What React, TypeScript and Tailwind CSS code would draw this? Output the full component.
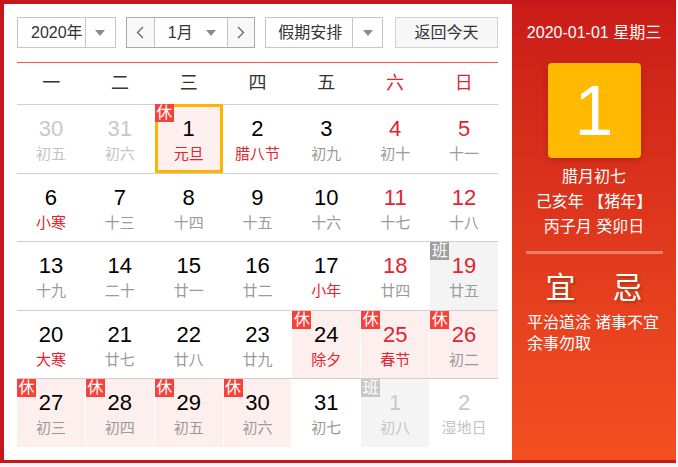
import React from "react";

type Day = {
  n: number;
  lunar: string;
  out?: boolean;
  red?: boolean;
  fest?: boolean;
  tag?: "休" | "班";
  selected?: boolean;
};

const rows: Day[][] = [
  [
    { n: 30, lunar: "初五", out: true },
    { n: 31, lunar: "初六", out: true },
    { n: 1, lunar: "元旦", fest: true, tag: "休", selected: true },
    { n: 2, lunar: "腊八节", fest: true },
    { n: 3, lunar: "初九" },
    { n: 4, lunar: "初十", red: true },
    { n: 5, lunar: "十一", red: true },
  ],
  [
    { n: 6, lunar: "小寒", fest: true },
    { n: 7, lunar: "十三" },
    { n: 8, lunar: "十四" },
    { n: 9, lunar: "十五" },
    { n: 10, lunar: "十六" },
    { n: 11, lunar: "十七", red: true },
    { n: 12, lunar: "十八", red: true },
  ],
  [
    { n: 13, lunar: "十九" },
    { n: 14, lunar: "二十" },
    { n: 15, lunar: "廿一" },
    { n: 16, lunar: "廿二" },
    { n: 17, lunar: "小年", fest: true },
    { n: 18, lunar: "廿四", red: true },
    { n: 19, lunar: "廿五", red: true, tag: "班" },
  ],
  [
    { n: 20, lunar: "大寒", fest: true },
    { n: 21, lunar: "廿七" },
    { n: 22, lunar: "廿八" },
    { n: 23, lunar: "廿九" },
    { n: 24, lunar: "除夕", fest: true, tag: "休" },
    { n: 25, lunar: "春节", fest: true, red: true, tag: "休" },
    { n: 26, lunar: "初二", red: true, tag: "休" },
  ],
  [
    { n: 27, lunar: "初三", tag: "休" },
    { n: 28, lunar: "初四", tag: "休" },
    { n: 29, lunar: "初五", tag: "休" },
    { n: 30, lunar: "初六", tag: "休" },
    { n: 31, lunar: "初七" },
    { n: 1, lunar: "初八", out: true, tag: "班" },
    { n: 2, lunar: "湿地日", out: true },
  ],
];

const weekdays = ["一", "二", "三", "四", "五", "六", "日"];

function Caret() {
  return (
    <svg width="10" height="6" viewBox="0 0 10 6">
      <path d="M0 0h10L5 6z" fill="#8c8c8c" />
    </svg>
  );
}

function Chevron({ dir }: { dir: "l" | "r" }) {
  return (
    <svg width="8" height="13" viewBox="0 0 8 13">
      <path
        d={dir === "l" ? "M7 1L1.5 6.5 7 12" : "M1 1l5.5 5.5L1 12"}
        fill="none"
        stroke="#666"
        strokeWidth="1.3"
      />
    </svg>
  );
}

function Cell({ d }: { d: Day }) {
  let bg = "";
  if (d.tag === "休") bg = "bg-[#fdefee]";
  if (d.tag === "班") bg = "bg-[#f4f4f4]";
  if (d.selected) bg = "bg-[#fdf0ef] border-[3px] border-[#ffb400] -mt-px";

  let numColor = "text-black";
  if (d.red) numColor = "text-[#e3232e]";
  if (d.out) numColor = "text-[#c8c8c8]";

  let lunarColor = "text-[#9a9a9a]";
  if (d.fest) lunarColor = "text-[#e3232e]";
  if (d.out) lunarColor = "text-[#c4c4c4]";

  const badgeBg = d.tag === "休" ? "bg-[#f8413a]" : d.out ? "bg-[#c8c8c8]" : "bg-[#9e9e9e]";

  return (
    <div className={`relative flex flex-col items-center ${bg} ${d.selected ? "pt-[9px]" : "pt-[11px]"}`}>
      {d.tag && (
        <span
          className={`absolute ${d.selected ? "-top-[3px] -left-[3px]" : "top-0 left-0"} w-[19px] h-[18px] ${badgeBg} text-white text-[16px] leading-[18px] text-center`}
        >
          {d.tag}
        </span>
      )}
      <span className={`text-[22px] leading-[26px] ${numColor}`}>{d.n}</span>
      <span className={`text-[15px] leading-[24px] ${lunarColor}`}>{d.lunar}</span>
    </div>
  );
}

export default function App() {
  return (
    <div
      className="w-[678px] h-[467px] bg-[#f4f4f4]"
      style={{ fontFamily: '"Liberation Sans", "Noto Sans CJK SC", sans-serif' }}
    >
      <div className="flex w-[676px] h-[463px] bg-[#c8171c] pl-[4px] pt-[4px] pb-[3px]">
        {/* left: calendar */}
        <div className="w-[508px] h-full bg-white pt-[13px] pl-[13px] pr-[14px]">
          <div className="flex h-[31px] text-[16px] text-[#333]">
            <div className="flex w-[99px] border border-[#c6c6c6] bg-white">
              <div className="flex-1 flex items-center pl-[13px]">2020年</div>
              <div className="w-[30px] border-l border-[#c6c6c6] flex items-center justify-center">
                <Caret />
              </div>
            </div>
            <div className="flex w-[130px] ml-[10px] border border-[#aaa]">
              <div className="w-[28px] bg-[#f8f8f8] border-r border-[#c6c6c6] flex items-center justify-center">
                <Chevron dir="l" />
              </div>
              <div className="flex-1 flex items-center bg-white pl-[13px]">
                <span className="flex-1">1月</span>
                <span className="mr-[11px] flex">
                  <Caret />
                </span>
              </div>
              <div className="w-[27px] bg-[#f8f8f8] border-l border-[#c6c6c6] flex items-center justify-center">
                <Chevron dir="r" />
              </div>
            </div>
            <div className="flex w-[118px] ml-[10px] border border-[#c6c6c6] bg-white">
              <div className="flex-1 flex items-center justify-center pl-[2px]">假期安排</div>
              <div className="w-[30px] border-l border-[#c6c6c6] flex items-center justify-center">
                <Caret />
              </div>
            </div>
            <div className="w-[103px] ml-[12px] border border-[#d2d2d2] bg-[#f7f7f7] flex items-center justify-center">
              返回今天
            </div>
          </div>

          <div className="mt-[14px] border-t border-[#f2574c]">
            <div className="grid grid-cols-7 h-[41px] items-center text-[18px] text-[#333]">
              {weekdays.map((w, i) => (
                <div key={w} className={`text-center ${i >= 5 ? "text-[#e3232e]" : ""}`}>
                  {w}
                </div>
              ))}
            </div>
            {rows.map((row, ri) => (
              <div key={ri} className="grid grid-cols-7 gap-x-px h-[68.6px] border-t border-[#cfcfcf]">
                {row.map((d, ci) => (
                  <Cell key={ci} d={d} />
                ))}
              </div>
            ))}
          </div>
        </div>

        {/* right: today panel */}
        <div className="w-[164px] h-full bg-gradient-to-b from-[#ca1b18] to-[#f44f22] text-white flex flex-col items-center">
          <div className="mt-[18px] text-[16px] leading-[22px]">2020-01-01 星期三</div>
          <div className="mt-[19px] w-[93px] h-[95px] rounded-[4px] bg-[#ffb900] shadow-[0_2px_6px_rgba(120,20,0,0.35)] flex items-center justify-center text-[70px] leading-none">
            1
          </div>
          <div className="mt-[6px] text-[16px] leading-[25px] text-center">
            <div>腊月初七</div>
            <div>己亥年 【猪年】</div>
            <div>丙子月 癸卯日</div>
          </div>
          <div className="mt-[12px] w-[137px] h-[3px] bg-white/35" />
          <div className="grid grid-cols-2 w-[134px] mt-[18px]">
            <div className="text-center text-[30px] leading-[32px] [text-shadow:2px_2px_2px_rgba(140,50,0,0.55)]">宜</div>
            <div className="text-center text-[30px] leading-[32px] [text-shadow:2px_2px_2px_rgba(140,50,0,0.55)]">忌</div>
            <div className="mt-[8px] text-[16px] leading-[21px] pr-[1px]">平治道涂 余事勿取</div>
            <div className="mt-[8px] text-[16px] leading-[21px] pl-[1px]">诸事不宜</div>
          </div>
        </div>
      </div>
    </div>
  );
}
